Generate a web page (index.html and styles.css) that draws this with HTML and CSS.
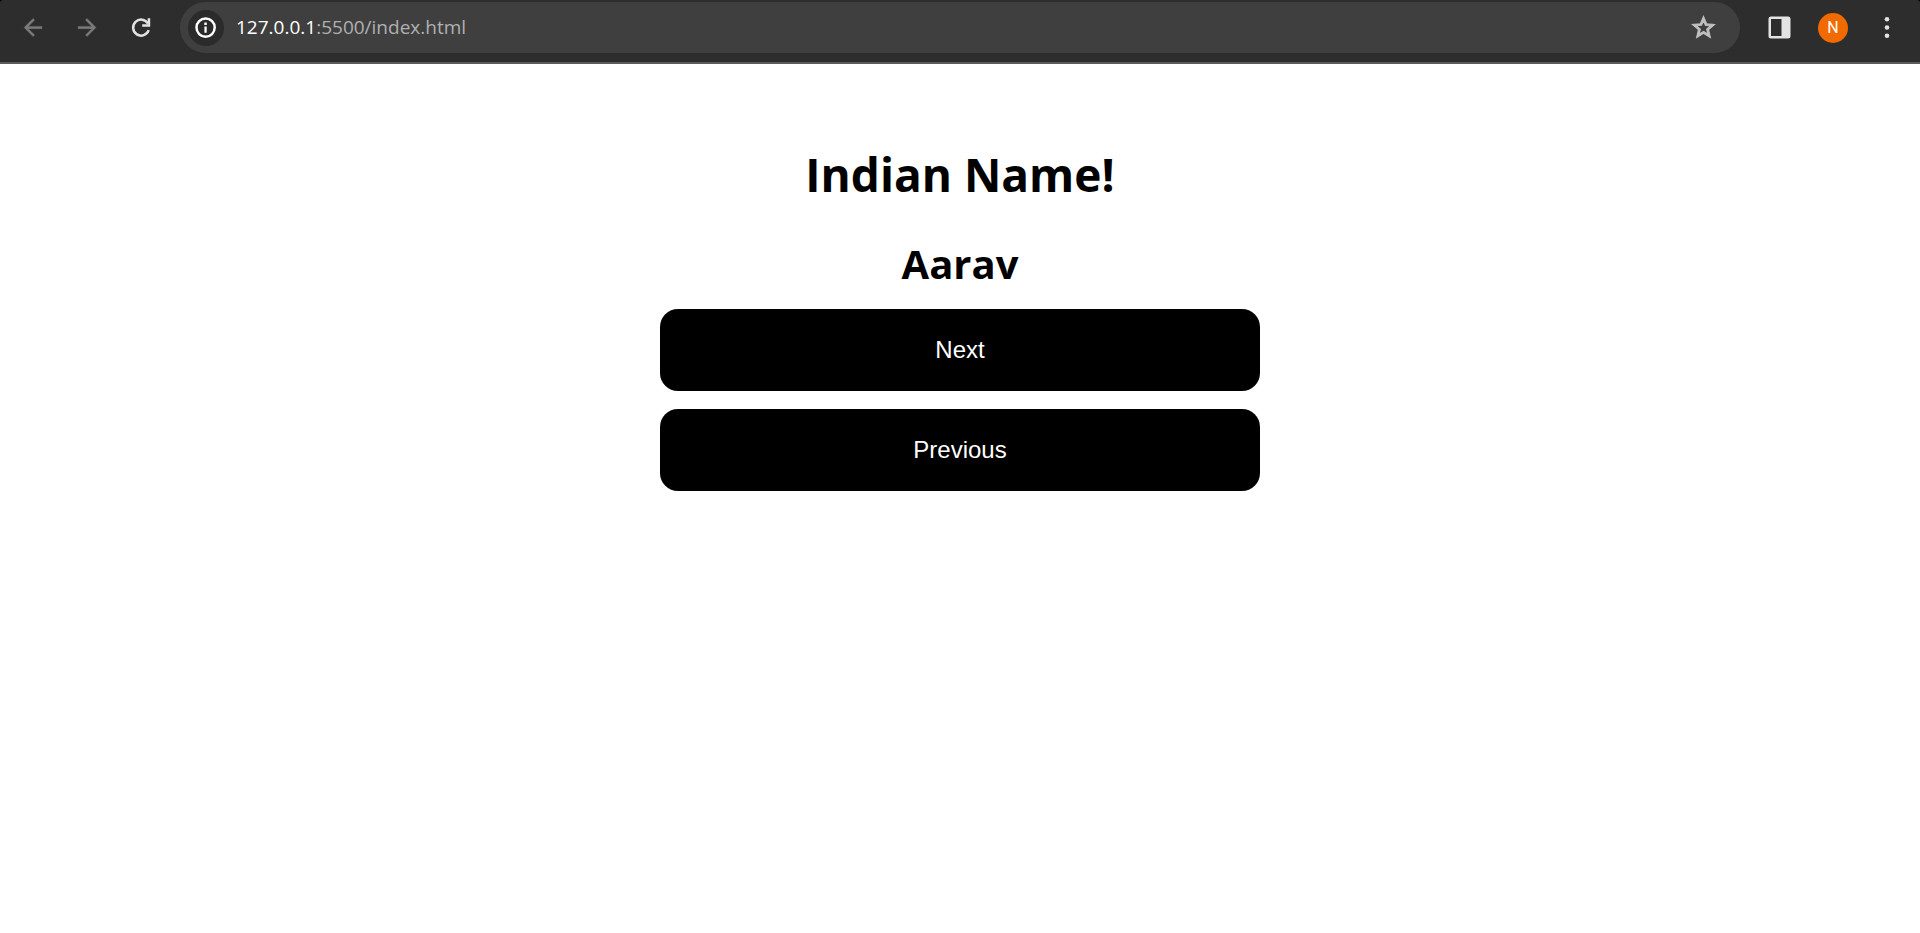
FILE: index.html
```html
<!DOCTYPE html>
<html lang="en">
<head>
<meta charset="utf-8">
<title>Indian Name!</title>
<link rel="stylesheet" href="styles.css">
</head>
<body>
<header class="frame">
  <nav class="toolbar" aria-label="Browser">
    <div class="tools">
      <button class="tool dim" type="button" aria-label="Back">
        <svg class="icon" viewBox="0 0 24 24"><path fill="currentColor" stroke="currentColor" stroke-width=".3" d="M19.600 11H7.430l5.590-5.590L11.600 4l-8 8 8 8 1.410-1.410L7.430 13H19.600z"/></svg>
      </button>
      <button class="tool dim" type="button" aria-label="Forward">
        <svg class="icon" viewBox="0 0 24 24"><path fill="currentColor" stroke="currentColor" stroke-width=".3" d="M11.600 4l-1.410 1.410L15.770 11H3.600v2h12.170l-5.580 5.590L11.600 20l8-8z"/></svg>
      </button>
      <button class="tool" type="button" aria-label="Reload">
        <svg class="icon" viewBox="0 0 27 27"><path fill="none" stroke="currentColor" stroke-width="2.500" d="M20.700 16.200A8 8 0 1 1 20 9.500"/><path fill="currentColor" d="M19.700 4.300h2.500v8.400h-8v-2.500h5.500z"/></svg>
      </button>
    </div>
    <form class="address">
      <button class="info" type="button" aria-label="Site information">
        <svg class="info-icon" viewBox="0 0 22 22"><circle cx="10.600" cy="10.600" r="9.100" fill="none" stroke="currentColor" stroke-width="2.500"/><path fill="currentColor" d="M9.400 9.600h2.300v6.200H9.400zM9.300 5.600h2.500v2.500H9.300z"/></svg>
      </button>
      <a class="url" href="#"><span class="host">127.0.0.1</span>:5500/index.html</a>
      <button class="star" type="button" aria-label="Bookmark">
        <svg class="icon" viewBox="0 0 24 24"><path fill="currentColor" stroke="currentColor" stroke-width=".9" d="M22 9.240l-7.190-.62L12 2 9.190 8.630 2 9.240l5.460 4.730L5.820 21 12 17.270 18.180 21l-1.630-7.030L22 9.240zM12 15.400l-3.760 2.270 1-4.280-3.320-2.880 4.380-.38L12 6.100l1.710 4.040 4.380.38-3.320 2.880 1 4.280L12 15.400z"/></svg>
      </button>
    </form>
    <div class="tools">
      <button class="tool" type="button" aria-label="Side panel">
        <svg class="icon" viewBox="0 0 27 27"><path fill="currentColor" fill-rule="evenodd" d="M5 2.500h17A2.500 2.500 0 0 1 24.500 5v17a2.500 2.500 0 0 1-2.500 2.500H5A2.500 2.500 0 0 1 2.500 22V5A2.500 2.500 0 0 1 5 2.500zM5 5v17h10.500V5z"/></svg>
      </button>
      <button class="tool" type="button" aria-label="Profile"><span class="avatar">N</span></button>
      <button class="tool" type="button" aria-label="Menu">
        <svg class="icon" viewBox="0 0 27 27"><g fill="currentColor"><circle cx="13" cy="5.200" r="2.300"/><circle cx="13" cy="13.500" r="2.300"/><circle cx="13" cy="21.800" r="2.300"/></g></svg>
      </button>
    </div>
  </nav>
</header>
<main class="page">
  <h1 class="title">Indian Name!</h1>
  <h2 class="name">Aarav</h2>
  <div class="actions">
    <button class="action" type="button">Next</button>
    <button class="action" type="button">Previous</button>
  </div>
</main>
</body>
</html>
```
FILE: styles.css
```css
* {
  box-sizing: border-box;
}

body {
  margin: 0;
  background: #fff;
  color: #000;
  font-family: "Open Sans", "Noto Sans", sans-serif;
}

button {
  margin: 0;
  padding: 0;
  border: 0;
  background: none;
  color: inherit;
  font: inherit;
  cursor: pointer;
}

.frame {
  background: #000;
}

.toolbar {
  display: flex;
  align-items: center;
  gap: 18px;
  padding: 2px 12px 9px;
  border-bottom: 2px solid #5a5a5a;
  border-radius: 3px 3px 0 0;
  background: #2d2d2d;
  color: #e3e3e3;
}

.tools {
  display: flex;
  gap: 12px;
}

.tool {
  display: flex;
  align-items: center;
  justify-content: center;
  width: 42px;
  height: 42px;
}

.dim {
  color: #7b7b7b;
}

.icon {
  display: block;
  width: 27px;
  height: 27px;
}

.address {
  display: flex;
  flex: 1;
  align-items: center;
  gap: 12px;
  height: 51px;
  padding: 0 23px 0 8px;
  border-radius: 26px;
  background: #3f3f3f;
}

.info {
  display: flex;
  align-items: center;
  justify-content: center;
  width: 36px;
  height: 36px;
  border-radius: 50%;
  background: #2b2b2b;
  color: #fff;
}

.info-icon {
  width: 22px;
  height: 22px;
}

.url {
  flex: 1;
  padding-bottom: 1px;
  color: #b0b0b0;
  font-size: 19px;
  line-height: 26px;
  text-decoration: none;
}

.host {
  color: #fff;
}

.star {
  color: #c0c0c0;
}

.avatar {
  width: 30px;
  height: 30px;
  border-radius: 50%;
  background: #f06a00;
  color: #fff;
  font-family: Roboto, sans-serif;
  font-size: 16px;
  line-height: 30px;
  text-align: center;
}

.page {
  display: flex;
  flex-direction: column;
  align-items: center;
  padding: 78px 24px;
}

.title,
.name {
  margin: 0;
  font-weight: 700;
}

.title {
  font-size: 46px;
  line-height: 64px;
}

.name {
  margin-top: 30px;
  font-size: 40px;
  line-height: 56px;
}

.actions {
  display: grid;
  gap: 18px;
  width: 100%;
  max-width: 600px;
  margin-top: 17px;
}

.action {
  padding: 27px;
  border-radius: 18px;
  background: #000;
  color: #fff;
  font-family: "Liberation Sans", Arial, sans-serif;
  font-size: 24px;
  line-height: 28px;
}
```
